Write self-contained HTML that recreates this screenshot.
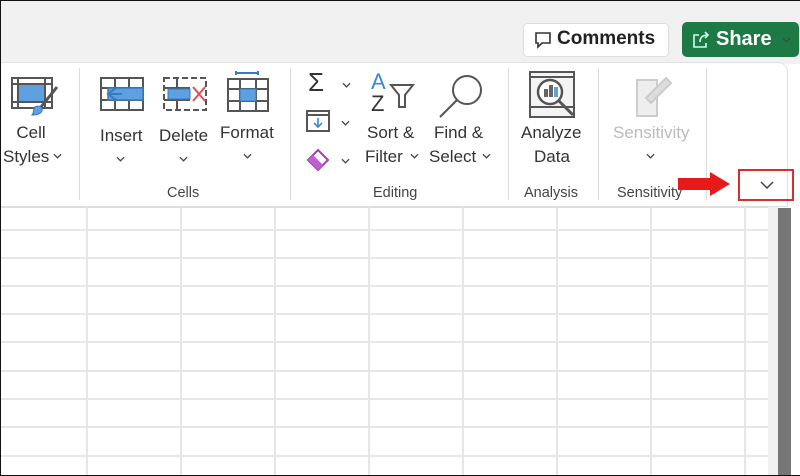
<!DOCTYPE html>
<html><head><meta charset="utf-8"><style>
*{margin:0;padding:0;box-sizing:border-box}
body{width:800px;height:476px;overflow:hidden;background:#fff;font-family:"Liberation Sans",sans-serif;color:#333;position:relative}
.abs{position:absolute}
.top{left:0;top:0;width:800px;height:64px;background:#f1f1f1}
.rib{left:0;top:62px;width:788px;height:145px;background:#fff;border:1px solid #e2e2e2;border-left:none;border-radius:0 10px 0 0}
.sep{width:1px;background:#dcdcdc;top:68px;height:132px}
.t{position:absolute;font-size:17px;color:#333;text-align:center;line-height:24px;white-space:nowrap}
.g{position:absolute;font-size:14.5px;color:#444;text-align:center;white-space:nowrap}
.cv{position:absolute}
.hl{left:0;width:768px;height:2px;background:#e6e6e6}
.vl{top:207px;width:2px;height:269px;background:#e6e6e6}
</style></head><body>
<svg width="0" height="0" style="position:absolute"><defs><symbol id="ch" viewBox="0 0 10 6"><path d="M1 1l4 4 4-4" fill="none" stroke="#444" stroke-width="1.4"/></symbol></defs></svg>
<div class="abs top"></div>
<div class="abs" style="left:523px;top:23px;width:146px;height:34px;background:#fff;border:1px solid #ddd;border-radius:5px"></div>
<svg class="abs" style="left:534px;top:31px" width="18" height="18" viewBox="0 0 18 18"><path d="M2 2h14v10H8l-4 4v-4H2z" fill="none" stroke="#333" stroke-width="1.6"/></svg>
<div class="t" style="left:557px;top:27px;font-size:19px;font-weight:bold;color:#222">Comments</div>
<div class="abs" style="left:682px;top:22px;width:117px;height:35px;background:#1e7a45;border-radius:5px"></div>
<svg class="abs" style="left:691px;top:30px" width="20" height="20" viewBox="0 0 20 20"><path d="M8 5H3v12h12v-4M9 12c0-5 3-7 8-7M14 2l3 3-3 3" fill="none" stroke="#cfe" stroke-width="1.6"/></svg>
<div class="t" style="left:716px;top:27px;font-size:20px;font-weight:bold;color:#fff">Share</div>
<svg class="cv" style="left:782px;top:37px" width="9" height="6"><use href="#ch" stroke="#fff"/></svg>

<div class="abs rib"></div>
<div class="abs sep" style="left:79px"></div>
<div class="abs sep" style="left:290px"></div>
<div class="abs sep" style="left:508px"></div>
<div class="abs sep" style="left:598px"></div>
<div class="abs sep" style="left:706px"></div>

<svg class="abs" style="left:11px;top:77px" width="48" height="42" viewBox="0 0 48 42"><rect x="1" y="1" width="40" height="30" fill="none" stroke="#555" stroke-width="2"/><rect x="7" y="7" width="27" height="18" fill="#5fa0e0" stroke="#3a7ac0"/><path d="M1 7h40M1 25h40M7 1v30M34 1v30" stroke="#555" stroke-width="2"/><path d="M46 10L30 30" stroke="#555" stroke-width="3"/><path d="M24 30c4-2 8 0 7 4-2 4-8 4-10 4 2-2 1-6 3-8z" fill="#5fa0e0" stroke="#3a7ac0"/></svg>
<div class="t" style="left:0;top:121px;width:62px">Cell</div>
<div class="t" style="left:3px;top:145px">Styles</div>
<svg class="cv" style="left:53px;top:153px" width="9" height="6"><use href="#ch"/></svg>

<svg class="abs" style="left:98px;top:77px" width="48" height="34" viewBox="0 0 48 34"><rect x="3" y="1" width="42" height="32" fill="none" stroke="#555" stroke-width="2"/><path d="M3 11h42M3 23h42M17 1v32M31 1v32" stroke="#555" stroke-width="2"/><rect x="10" y="11" width="35" height="12" fill="#5fa0e0" stroke="#3a7ac0" stroke-width="1.5"/><path d="M18 11l-8 6 8 6M10 17h14" fill="none" stroke="#3a7ac0" stroke-width="2"/></svg>
<div class="t" style="left:100px;top:124px">Insert</div>
<svg class="cv" style="left:116px;top:156px" width="9" height="6"><use href="#ch"/></svg>

<svg class="abs" style="left:163px;top:77px" width="46" height="34" viewBox="0 0 46 34"><rect x="1" y="1" width="42" height="32" fill="none" stroke="#555" stroke-width="2" stroke-dasharray="6 3"/><path d="M1 11h26M1 23h26M14 1v32" stroke="#555" stroke-width="2"/><rect x="5" y="12" width="22" height="10" fill="#5fa0e0" stroke="#3a7ac0"/><path d="M30 10l12 14M42 10L30 24" stroke="#e05050" stroke-width="2"/></svg>
<div class="t" style="left:159px;top:124px">Delete</div>
<svg class="cv" style="left:179px;top:156px" width="9" height="6"><use href="#ch"/></svg>

<svg class="abs" style="left:226px;top:70px" width="44" height="42" viewBox="0 0 44 42"><path d="M10 3h22M10 1v4M32 1v4" stroke="#3a7ac0" stroke-width="2"/><rect x="2" y="9" width="40" height="32" fill="none" stroke="#555" stroke-width="2"/><path d="M2 19h40M2 31h40M14 9v32M30 9v32" stroke="#555" stroke-width="2"/><rect x="14" y="19" width="16" height="12" fill="#5fa0e0" stroke="#3a7ac0"/></svg>
<div class="t" style="left:220px;top:121px">Format</div>
<svg class="cv" style="left:243px;top:153px" width="9" height="6"><use href="#ch"/></svg>

<div class="t" style="left:308px;top:70px;font-size:26px">&Sigma;</div>
<svg class="cv" style="left:342px;top:82px" width="9" height="6"><use href="#ch"/></svg>
<svg class="abs" style="left:306px;top:110px" width="24" height="22" viewBox="0 0 24 22"><rect x="1" y="1" width="22" height="20" fill="#fff" stroke="#555" stroke-width="2"/><path d="M1 5h22" stroke="#555" stroke-width="2"/><path d="M12 8v9M8 13l4 4 4-4" fill="none" stroke="#3a8ad0" stroke-width="1.6"/></svg>
<svg class="cv" style="left:341px;top:120px" width="9" height="6"><use href="#ch"/></svg>
<svg class="abs" style="left:306px;top:146px" width="26" height="26" viewBox="0 0 26 26"><path d="M2 14L12 4l10 10-10 10z" fill="#fff" stroke="#a040b0" stroke-width="2"/><path d="M2 14l5-5 10 10-5 5z" fill="#c060d0"/></svg>
<svg class="cv" style="left:341px;top:158px" width="9" height="6"><use href="#ch"/></svg>

<div class="t" style="left:371px;top:70px;color:#3a8ad0;font-size:22px">A</div>
<div class="t" style="left:371px;top:92px;font-size:22px">Z</div>
<svg class="abs" style="left:389px;top:83px" width="26" height="28" viewBox="0 0 26 28"><path d="M2 2h22l-8 10v12h-6V12z" fill="none" stroke="#555" stroke-width="2"/></svg>
<div class="t" style="left:367px;top:121px">Sort &amp;</div>
<div class="t" style="left:365px;top:145px">Filter</div>
<svg class="cv" style="left:410px;top:153px" width="9" height="6"><use href="#ch"/></svg>

<svg class="abs" style="left:437px;top:72px" width="50" height="48" viewBox="0 0 50 48"><circle cx="30" cy="18" r="14" fill="none" stroke="#555" stroke-width="2"/><path d="M20 28L3 45" stroke="#555" stroke-width="2"/></svg>
<div class="t" style="left:434px;top:121px">Find &amp;</div>
<div class="t" style="left:429px;top:145px">Select</div>
<svg class="cv" style="left:482px;top:153px" width="9" height="6"><use href="#ch"/></svg>

<svg class="abs" style="left:528px;top:70px" width="50" height="50" viewBox="0 0 50 50"><rect x="2" y="2" width="44" height="45" fill="#f4f4f4" stroke="#555" stroke-width="2"/><path d="M2 7h44M2 37h44" stroke="#555" stroke-width="2"/><circle cx="22" cy="22" r="12" fill="#fff" stroke="#555" stroke-width="2.5"/><rect x="16" y="19" width="4" height="8" fill="#666"/><rect x="21" y="15" width="4" height="12" fill="#666"/><rect x="26" y="17" width="4" height="10" fill="#5fa0e0"/><path d="M31 31l14 14" stroke="#555" stroke-width="3"/></svg>
<div class="t" style="left:521px;top:121px">Analyze</div>
<div class="t" style="left:534px;top:145px">Data</div>

<svg class="abs" style="left:634px;top:70px" width="40" height="48" viewBox="0 0 40 48"><path d="M3 10h20v36H3z" fill="#eee" stroke="#ccc" stroke-width="2"/><path d="M12 28l20-20 5 5-20 20z" fill="#ddd" stroke="#ccc" stroke-width="2"/></svg>
<div class="t" style="left:613px;top:121px;color:#bbb">Sensitivity</div>
<svg class="cv" style="left:646px;top:153px" width="9" height="6"><use href="#ch" stroke="#ccc"/></svg>

<div class="g" style="left:167px;top:185px">Cells</div>
<div class="g" style="left:373px;top:185px">Editing</div>
<div class="g" style="left:524px;top:185px">Analysis</div>
<div class="g" style="left:617px;top:185px">Sensitivity</div>

<svg class="abs" style="left:678px;top:172px" width="54" height="24" viewBox="0 0 54 24"><path d="M0 6h32V0l20 12-20 12v-6H0z" fill="#e8191b"/></svg>
<div class="abs" style="left:738px;top:169px;width:56px;height:32px;border:2px solid #d83030"></div>
<svg class="abs" style="left:760px;top:181px" width="14" height="8" viewBox="0 0 14 8"><path d="M1 1l6 6 6-6" fill="none" stroke="#444" stroke-width="1.5"/></svg>

<div class="abs hl" style="top:206px;background:#ddd"></div>
<div class="abs hl" style="top:229px"></div>
<div class="abs hl" style="top:257px"></div>
<div class="abs hl" style="top:285px"></div>
<div class="abs hl" style="top:313px"></div>
<div class="abs hl" style="top:341px"></div>
<div class="abs hl" style="top:370px"></div>
<div class="abs hl" style="top:398px"></div>
<div class="abs hl" style="top:426px"></div>
<div class="abs hl" style="top:455px"></div>
<div class="abs vl" style="left:86px"></div>
<div class="abs vl" style="left:180px"></div>
<div class="abs vl" style="left:274px"></div>
<div class="abs vl" style="left:368px"></div>
<div class="abs vl" style="left:462px"></div>
<div class="abs vl" style="left:556px"></div>
<div class="abs vl" style="left:650px"></div>
<div class="abs vl" style="left:744px"></div>
<div class="abs" style="left:768px;top:207px;width:10px;height:269px;background:#f0f0f0"></div>
<div class="abs" style="left:778px;top:208px;width:13px;height:268px;background:#777"></div>
<div class="abs" style="left:0;top:0;width:800px;height:476px;border:1px solid #111;border-right:none"></div>
</body></html>
